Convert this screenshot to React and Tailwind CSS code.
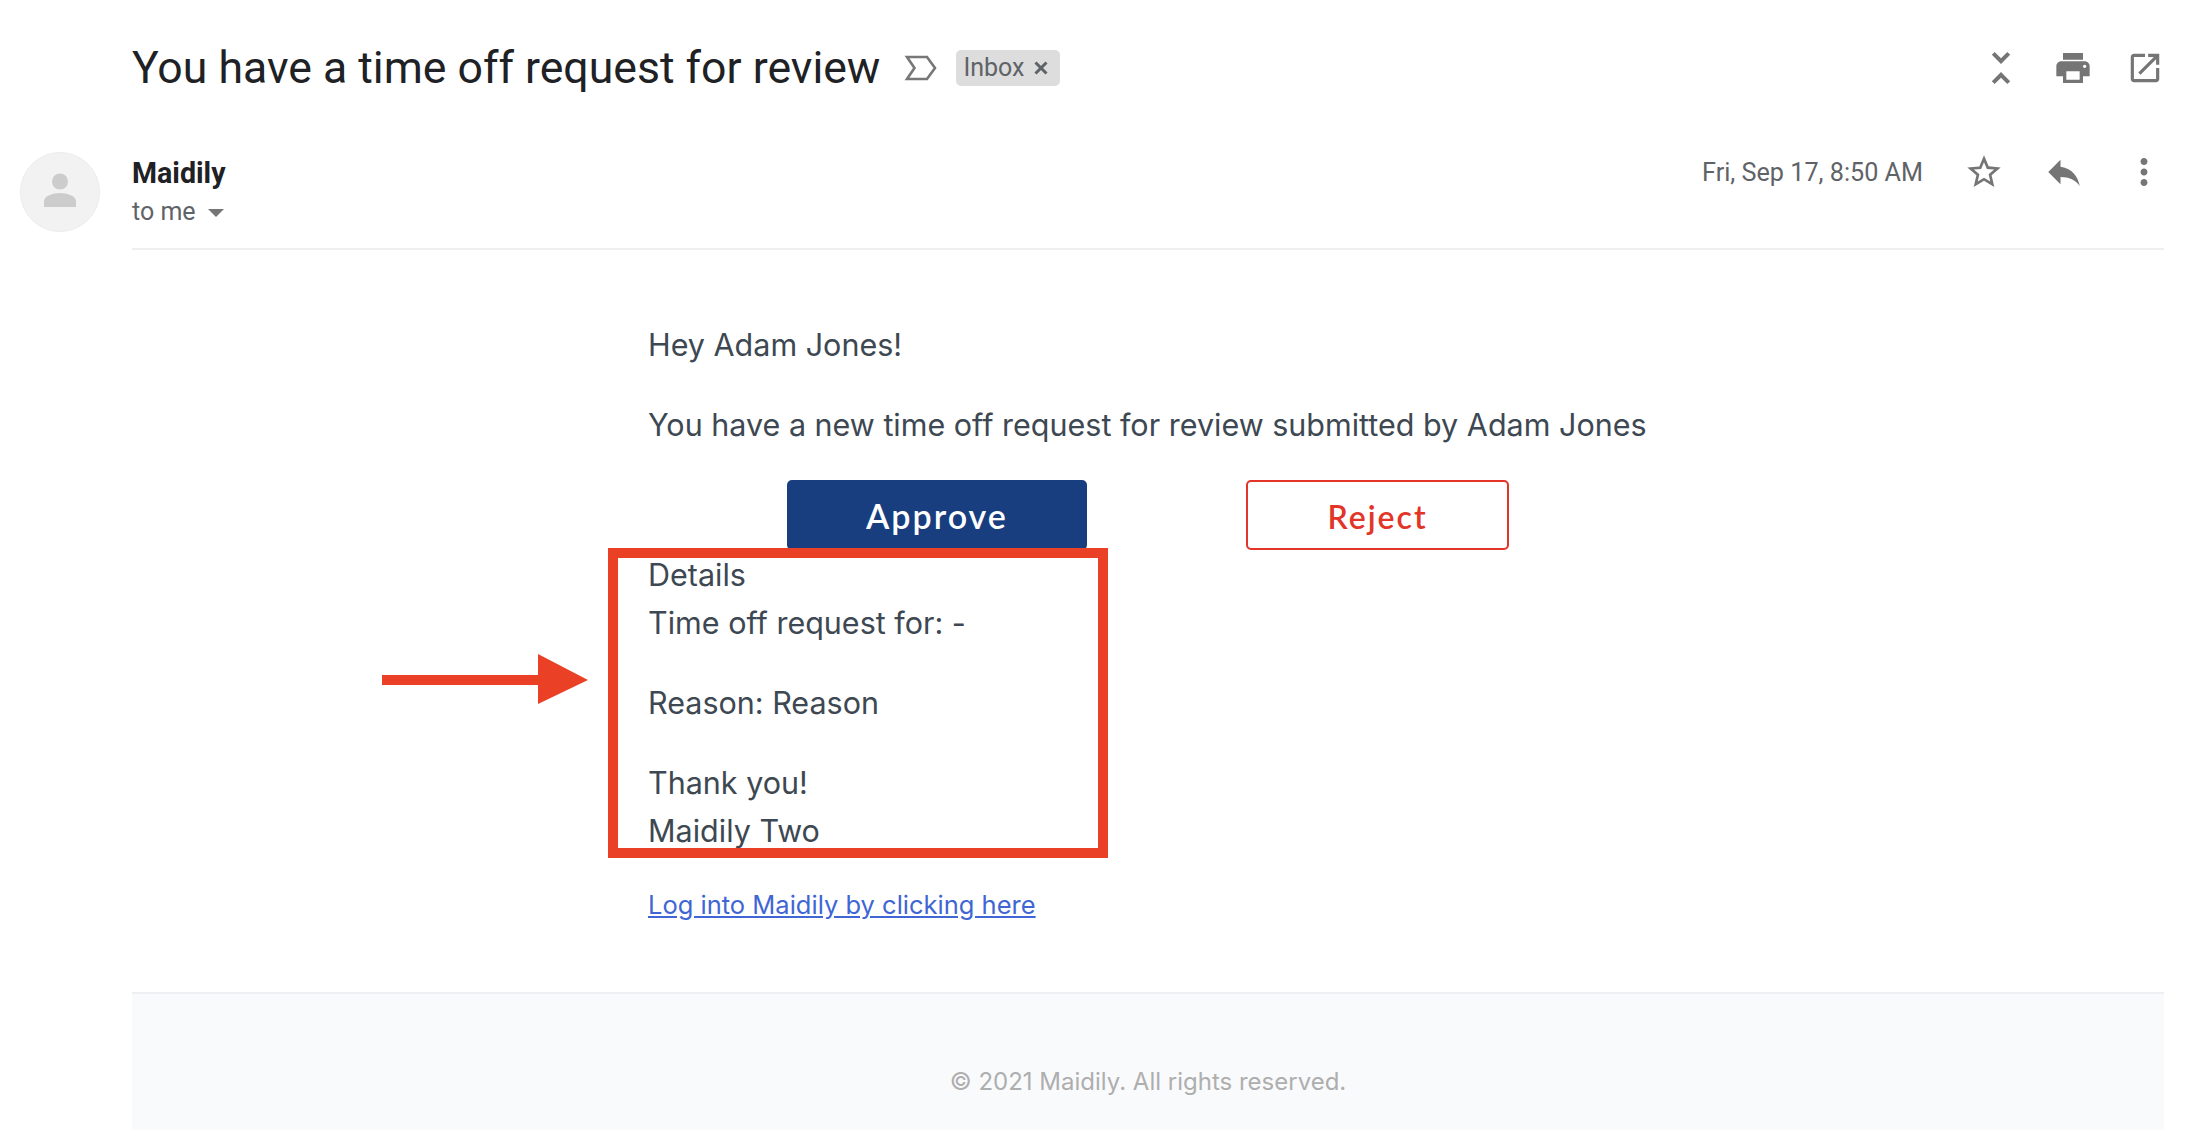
import React from 'react';

const Icon = ({ d, size = 40 }) => (
  <svg width={size} height={size} viewBox="0 0 24 24" fill="#757575" className="shrink-0">
    <path d={d} />
  </svg>
);

const App = () => {
  return (
    <div className="relative flex flex-col w-[2202px] h-[1130px] overflow-hidden bg-white font-['Roboto',sans-serif]">
      {/* Subject row */}
      <div className="flex items-center h-[66px] mt-[35px] pl-[132px] pr-[38px]">
        <h1 className="text-[44.6px] font-normal leading-none text-[#202124] whitespace-nowrap">You have a time off request for review</h1>
        <svg width="34" height="26" viewBox="0 0 34 26" className="ml-[24px] shrink-0">
          <path d="M3 2 H23 L31 13 L23 24 H3 L10.5 13 Z" fill="none" stroke="#777777" strokeWidth="2.6" />
        </svg>
        <div className="flex items-center ml-[18px] h-[36px] w-[104px] pl-[7px] rounded-[5px] bg-[#dddddd] text-[25px] text-[#5f6368]">
          <span>Inbox</span>
          <svg width="16" height="16" viewBox="0 0 16 16" className="ml-[9px]">
            <path d="M2.5 2.5 L13.5 13.5 M13.5 2.5 L2.5 13.5" stroke="#5f6368" strokeWidth="3" />
          </svg>
        </div>
        <div className="flex items-center ml-auto">
          <Icon size={48} d="M7.41 18.59L8.83 20 12 16.83 15.17 20l1.41-1.41L12 14l-4.59 4.59zm9.18-13.18L15.17 4 12 7.17 8.83 4 7.41 5.41 12 10l4.59-4.59z" />
          <div className="ml-[28px]">
            <Icon d="M19 8H5c-1.66 0-3 1.34-3 3v6h4v4h12v-4h4v-6c0-1.66-1.34-3-3-3zm-3 11H8v-5h8v5zm3-7c-.55 0-1-.45-1-1s.45-1 1-1 1 .45 1 1-.45 1-1 1zm-1-9H6v4h12V3z" />
          </div>
          <div className="ml-[33px]">
            <Icon size={38} d="M19 19H5V5h7V3H5c-1.11 0-2 .9-2 2v14c0 1.1.89 2 2 2h14c1.1 0 2-.9 2-2v-7h-2v7zM14 3v2h3.59l-9.83 9.83 1.41 1.41L19 6.41V10h2V3h-7z" />
          </div>
        </div>
      </div>

      {/* Sender row */}
      <div className="flex mt-[51px] pl-[20px] pr-[38px]">
        <div className="relative w-[80px] h-[80px] rounded-full bg-[#f2f2f2] border border-[#ececec] shrink-0 overflow-hidden">
          <svg width="80" height="80" viewBox="0 0 80 80" className="absolute left-[-1px] top-[-1px]">
            <circle cx="40" cy="29.5" r="8" fill="#cccccc" />
            <path d="M24 55 V49 C24 44 33 41 40 41 C47 41 56 44 56 49 V55 Z" fill="#cccccc" />
          </svg>
        </div>
        <div className="flex flex-1 items-start ml-[32px] h-[98px] border-b-2 border-[#eeeff1]">
          <div>
            <div className="text-[28.6px] leading-[32px] mt-[5px] font-bold text-[#202124]">Maidily</div>
            <div className="flex items-center mt-[8px] text-[25px] leading-[30px] text-[#5f6368]">
              to me
              <span className="ml-[12px] mt-[1px] w-0 h-0 border-x-[8px] border-x-transparent border-t-[8px] border-t-[#757575]" />
            </div>
          </div>
          <div className="flex items-center ml-auto h-[40px]">
            <span className="mt-[2px] text-[25.2px] text-[#5f6368] mr-[41px] whitespace-nowrap">Fri, Sep 17, 8:50 AM</span>
            <Icon d="M22 9.24l-7.19-.62L12 2 9.19 8.63 2 9.24l5.46 4.73L5.82 21 12 17.27 18.18 21l-1.63-7.03L22 9.24zM12 15.4l-3.76 2.27 1-4.28-3.32-2.88 4.38-.38L12 6.1l1.71 4.04 4.38.38-3.32 2.88 1 4.28L12 15.4z" />
            <div className="ml-[39px]">
              <Icon size={42} d="M10 9V5l-7 7 7 7v-4.1c5 0 8.5 1.6 11 5.1-1-5-4-10-11-11z" />
            </div>
            <div className="ml-[38px] mr-[-1px]">
              <Icon size={42} d="M12 8c1.1 0 2-.9 2-2s-.9-2-2-2-2 .9-2 2 .9 2 2 2zm0 2c-1.1 0-2 .9-2 2s.9 2 2 2 2-.9 2-2-.9-2-2-2zm0 6c-1.1 0-2 .9-2 2s.9 2 2 2 2-.9 2-2-.9-2-2-2z" />
            </div>
          </div>
        </div>
      </div>

      {/* Message body */}
      <div className="flex flex-col flex-1 ml-[132px] mr-[38px] font-['Inter',sans-serif]">
        <div className="pl-[516px] pt-[71px] text-[#3d4852] text-[30.5px] leading-[48px]">
          <p>Hey Adam Jones!</p>
          <p className="mt-[32px]">You have a new time off request for review submitted by Adam Jones</p>
          <div className="flex mt-[31px] ml-[139px] font-['Lato',sans-serif]">
            <div className="flex items-center justify-center pt-[2px] w-[300px] h-[70px] rounded-[5px] bg-[#183e7f] text-white text-[34px] font-semibold tracking-[2px]">Approve</div>
            <div className="flex items-center justify-center pt-[4px] ml-[159px] w-[263px] h-[70px] rounded-[5px] border-2 border-[#e23528] text-[#e23528] text-[32px] font-semibold tracking-[2px]">Reject</div>
          </div>
          <p className="mt-px">Details</p>
          <p>Time off request for: -</p>
          <p className="mt-[32px]">Reason: Reason</p>
          <p className="mt-[32px]">Thank you!</p>
          <p>Maidily Two</p>
          <a href="#" className="block mt-[34px] text-[25.5px] leading-[32px] text-[#3f66d4] underline">Log into Maidily by clicking here</a>
        </div>
        <div className="flex-1 mt-[71px] pt-[72px] text-center text-[24px] leading-[32px] text-[#aeaeae] bg-[#f9fafc] border-t-2 border-[#eeeff2]">
          © 2021 Maidily. All rights reserved.
        </div>
      </div>

      {/* Annotation drawn over the email */}
      <div className="absolute left-[608px] top-[548px] w-[500px] h-[310px] border-[10px] border-[#ea4126]" />
      <svg width="210" height="52" viewBox="0 0 210 52" className="absolute left-[380px] top-[654px]">
        <path d="M2 21 H158 V0 L208 26 L158 50 V31 H2 Z" fill="#ea4126" />
      </svg>
    </div>
  );
};

export default App;
